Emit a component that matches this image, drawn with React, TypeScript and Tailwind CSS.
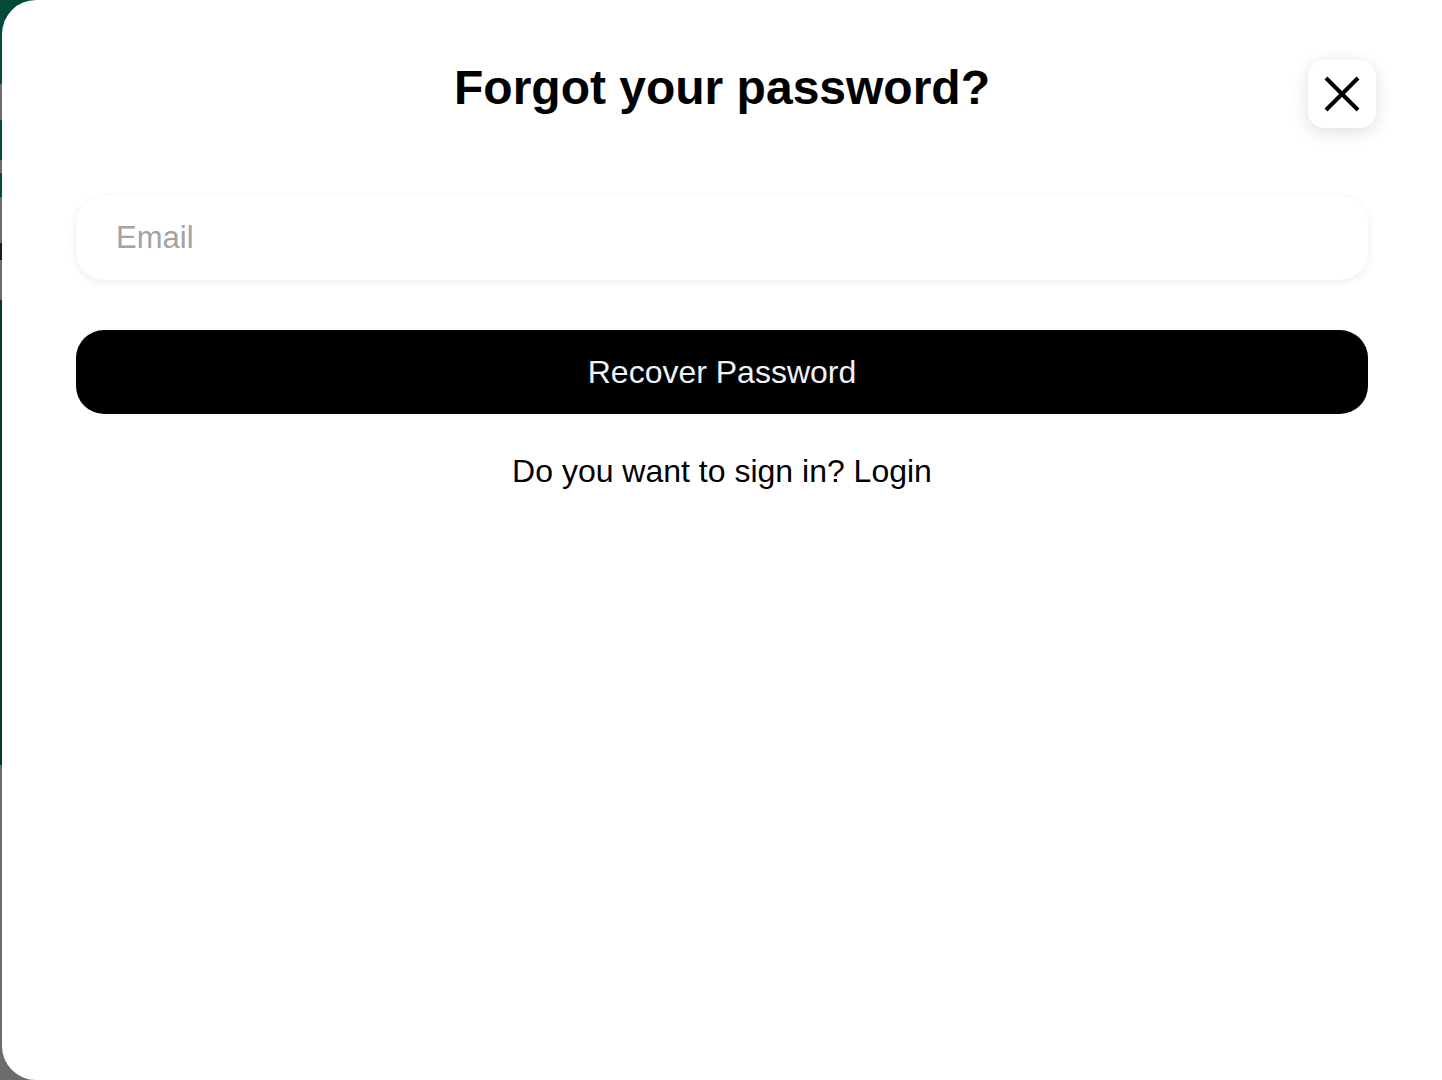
import React from "react";

const stripes: { h: string; c: string }[] = [
  { h: "h-[84px]", c: "bg-[#034a3a]" },
  { h: "h-[36px]", c: "bg-[#6c6c6c]" },
  { h: "h-[40px]", c: "bg-[#034a3a]" },
  { h: "h-[13px]", c: "bg-[#6c6c6c]" },
  { h: "h-[24px]", c: "bg-[#034a3a]" },
  { h: "h-[46px]", c: "bg-[#6c6c6c]" },
  { h: "h-[17px]", c: "bg-[#1a1a1a]" },
  { h: "h-[40px]", c: "bg-[#6c6c6c]" },
  { h: "h-[465px]", c: "bg-[#02392c]" },
  { h: "flex-1", c: "bg-[#6c6c6c]" },
];

export default function App() {
  return (
    <div
      className="relative flex h-[1080px] w-full overflow-hidden"
      style={{ fontFamily: '"Liberation Sans", Arial, Helvetica, sans-serif' }}
    >
      <div className="absolute inset-y-0 left-0 flex w-[40px] flex-col">
        {stripes.map((s, i) => (
          <div key={i} className={`${s.h} ${s.c} w-full`} />
        ))}
      </div>
      <div className="relative ml-[2px] flex flex-1 flex-col items-center rounded-l-[34px] bg-white px-[74px] pt-[58px]">
        <h1 className="text-[48px] font-bold leading-[60px] text-black">Forgot your password?</h1>
        <button className="absolute right-[66px] top-[60px] flex h-[68px] w-[68px] items-center justify-center rounded-[16px] bg-white shadow-[0_4px_18px_rgba(0,0,0,0.13)]">
          <svg width="40" height="40" viewBox="0 0 40 40" fill="none" stroke="black" strokeWidth="4">
            <path d="M4 4 L36 36 M36 4 L4 36" />
          </svg>
        </button>
        <input
          type="email"
          placeholder="Email"
          className="mt-[78px] h-[84px] w-full rounded-[28px] bg-white px-[40px] text-[31px] text-black shadow-[0_2px_8px_rgba(0,0,0,0.08)] outline-none placeholder:text-[#a3a3a3]"
        />
        <button className="mt-[50px] flex h-[84px] w-full items-center justify-center rounded-[28px] bg-black text-[32px] text-[#eef2fb]">
          Recover Password
        </button>
        <p className="mt-[36px] text-[32px] leading-[42px] text-black">Do you want to sign in? Login</p>
      </div>
    </div>
  );
}
